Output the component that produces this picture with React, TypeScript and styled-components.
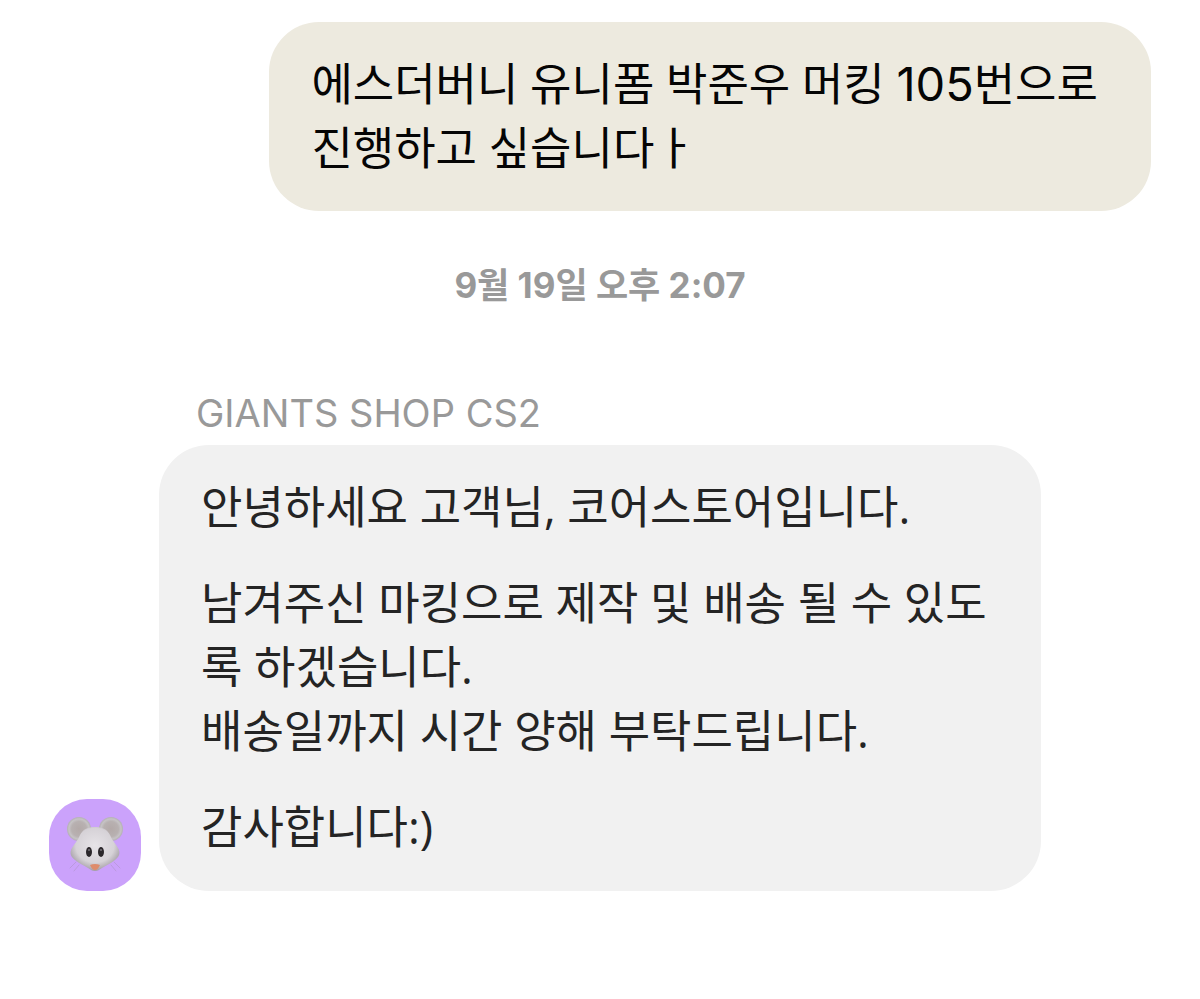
import React from "react";
import styled, { createGlobalStyle } from "styled-components";

const GlobalStyle = createGlobalStyle`
  *, *::before, *::after { box-sizing: border-box; }
  body {
    margin: 0;
    background: #ffffff;
    font-family: "Open Sans", "Noto Sans CJK KR", sans-serif;
  }
`;

const Conversation = styled.main`
  display: flex;
  flex-direction: column;
  padding: 22px 49px 108px;
`;

const Row = styled.article<{ $mine?: boolean }>`
  display: flex;
  justify-content: ${({ $mine }) => ($mine ? "flex-end" : "flex-start")};
  align-items: flex-end;
  gap: 18px;
`;

const Bubble = styled.div<{ $mine?: boolean }>`
  display: flex;
  flex-direction: column;
  gap: 32px;
  width: 80%;
  padding: 30px 42px ${({ $mine }) => ($mine ? "31px" : "32px")};
  border-radius: 50px;
  background: ${({ $mine }) => ($mine ? "#edeadf" : "#f1f1f1")};
  color: ${({ $mine }) => ($mine ? "#050505" : "#242424")};
`;

const Paragraph = styled.p`
  margin: 0;
  font-size: 45px;
  line-height: 64px;
  word-break: break-all;
`;

const Digits = styled.span`
  font-family: Inter, sans-serif;
  font-size: 47px;
  line-height: 1;
`;

const Timestamp = styled.time`
  margin-top: 50px;
  font-family: Inter, "Noto Sans CJK KR", sans-serif;
  font-size: 35px;
  font-weight: 700;
  line-height: 48px;
  text-align: center;
  color: #999999;
`;

const Sender = styled.h2`
  margin: 80px 0 8px 147px;
  font-family: Inter, sans-serif;
  font-size: 38px;
  font-weight: 400;
  line-height: 48px;
  color: #999999;
`;

const Avatar = styled.svg`
  flex: none;
  width: 92px;
  height: 92px;
  border-radius: 38px;
  background: #cba2fb;
`;

function MouseAvatar() {
  return (
    <Avatar viewBox="0 0 92 92" role="img" aria-label="GIANTS SHOP CS2">
      <defs>
        <radialGradient id="ear" cx="50%" cy="50%" r="52%">
          <stop offset="0" stopColor="#b3a9a8" />
          <stop offset="0.6" stopColor="#b8b1b1" />
          <stop offset="0.8" stopColor="#c6c3c5" />
          <stop offset="1" stopColor="#b0acb0" />
        </radialGradient>
        <radialGradient id="face" cx="50%" cy="42%" r="60%">
          <stop offset="0" stopColor="#e6e3e7" />
          <stop offset="0.65" stopColor="#d6d2d7" />
          <stop offset="1" stopColor="#9d979e" />
        </radialGradient>
      </defs>
      <g stroke="#bb9ade" strokeWidth="1" fill="none" strokeLinecap="round">
        <path d="M27 63 L21 69 M30 66 L25 72" />
        <path d="M65 63 L71 69 M62 66 L67 72" />
      </g>
      <circle cx="30" cy="30" r="12" fill="url(#ear)" />
      <circle cx="62" cy="30" r="12" fill="url(#ear)" />
      <path
        d="M46 28 C53 28 58 30 61 36 C63 41 66 44 69 49 C72 54 70 58 66 61 C61 65 56 67 53 69 C50 71 49 72 46 72 C43 72 42 71 39 69 C36 67 31 65 26 61 C22 58 20 54 23 49 C26 44 29 41 31 36 C34 30 39 28 46 28 Z"
        fill="url(#face)"
      />
      <path d="M41 66 Q46 64 51 66 Q49 71 46 71 Q43 71 41 66 Z" fill="#de8b6b" />
      <ellipse cx="40" cy="53" rx="3" ry="5" fill="#2b272b" />
      <ellipse cx="52" cy="53" rx="3" ry="5" fill="#2b272b" />
      <circle cx="40" cy="51" r="1" fill="#77737a" />
      <circle cx="52" cy="51" r="1" fill="#77737a" />
    </Avatar>
  );
}

export default function App() {
  return (
    <>
      <GlobalStyle />
      <Conversation lang="ko">
        <Row $mine>
          <Bubble $mine>
            <Paragraph>
              에스더버니 유니폼 박준우 머킹 <Digits>105</Digits>번으로
              <br />
              진행하고 싶습니다ㅏ
            </Paragraph>
          </Bubble>
        </Row>
        <Timestamp dateTime="09-19T14:07">9월 19일 오후 2:07</Timestamp>
        <Sender>GIANTS SHOP CS2</Sender>
        <Row>
          <MouseAvatar />
          <Bubble>
            <Paragraph>안녕하세요 고객님, 코어스토어입니다.</Paragraph>
            <Paragraph>
              남겨주신 마킹으로 제작 및 배송 될 수 있도록 하겠습니다.
              <br />
              배송일까지 시간 양해 부탁드립니다.
            </Paragraph>
            <Paragraph>감사합니다:)</Paragraph>
          </Bubble>
        </Row>
      </Conversation>
    </>
  );
}
